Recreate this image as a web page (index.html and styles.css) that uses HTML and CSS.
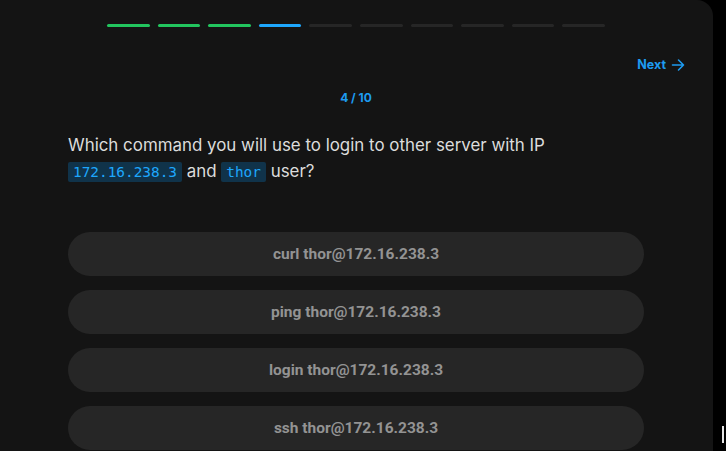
FILE: index.html
```html
<!DOCTYPE html>
<html>
<head>
<meta charset="utf-8">
<link rel="stylesheet" href="styles.css">
</head>
<body>
<div class="panel">
  <div class="progress">
    <span class="seg done"></span>
    <span class="seg done"></span>
    <span class="seg done"></span>
    <span class="seg current"></span>
    <span class="seg"></span>
    <span class="seg"></span>
    <span class="seg"></span>
    <span class="seg"></span>
    <span class="seg"></span>
    <span class="seg"></span>
  </div>
  <div class="nav">
    <a class="next">Next
      <svg width="14" height="14" viewBox="0 0 14 14" fill="none" stroke="currentColor" stroke-width="1.6" stroke-linecap="round" stroke-linejoin="round"><path d="M1.5 7h11M7.5 2l5 5-5 5"/></svg>
    </a>
  </div>
  <div class="counter">4 / 10</div>
  <p class="question">Which command you will use to login to other server with IP <code>172.16.238.3</code> and <code>thor</code> user?</p>
  <div class="options">
    <button class="option">curl thor@172.16.238.3</button>
    <button class="option">ping thor@172.16.238.3</button>
    <button class="option">login thor@172.16.238.3</button>
    <button class="option">ssh thor@172.16.238.3</button>
  </div>
</div>
<div class="caret"></div>
</body>
</html>
```
FILE: styles.css
```css
html, body {
  margin: 0;
  padding: 0;
  background: #000;
  height: 100%;
  overflow: hidden;
}
body {
  font-family: Inter, "Noto Sans", sans-serif;
}
.panel {
  width: 713px;
  height: 100%;
  background: #141414;
  border-top-right-radius: 16px;
  box-sizing: border-box;
  padding: 24px 69px 0 68px;
  display: flex;
  flex-direction: column;
}
.progress {
  display: flex;
  gap: 8px;
  justify-content: center;
}
.seg {
  width: 42.6px;
  height: 3px;
  border-radius: 2px;
  background: #262626;
}
.seg.done { background: #22c55e; }
.seg.current { background: #1ea7fd; }
.nav {
  display: flex;
  justify-content: flex-end;
  margin-top: 30px;
  margin-right: -41px;
}
.next {
  display: flex;
  align-items: center;
  gap: 5px;
  color: #1d9bf0;
  font-weight: 700;
  font-size: 12.5px;
  line-height: 16px;
}
.counter {
  margin-top: 17px;
  text-align: center;
  color: #1d9bf0;
  font-weight: 700;
  font-size: 12px;
  line-height: 16px;
}
.question {
  margin: 26px 0 0;
  color: #dcdcdc;
  font-size: 16.9px;
  line-height: 26px;
}
.question code {
  font-family: "DejaVu Sans Mono", monospace;
  font-size: 14.4px;
  color: #1ea7fd;
  background: #10334a;
  padding: 2px 5px;
  border-radius: 2px;
}
.options {
  margin-top: 47px;
  display: flex;
  flex-direction: column;
  gap: 14px;
}
.option {
  height: 44px;
  border: none;
  border-radius: 22px;
  background: #262626;
  color: #939393;
  font-family: Roboto, sans-serif;
  font-weight: 700;
  font-size: 15.5px;
  padding: 0;
}
.caret {
  position: absolute;
  left: 722px;
  top: 426px;
  width: 2px;
  height: 17px;
  background: #e5e5e5;
}
```
